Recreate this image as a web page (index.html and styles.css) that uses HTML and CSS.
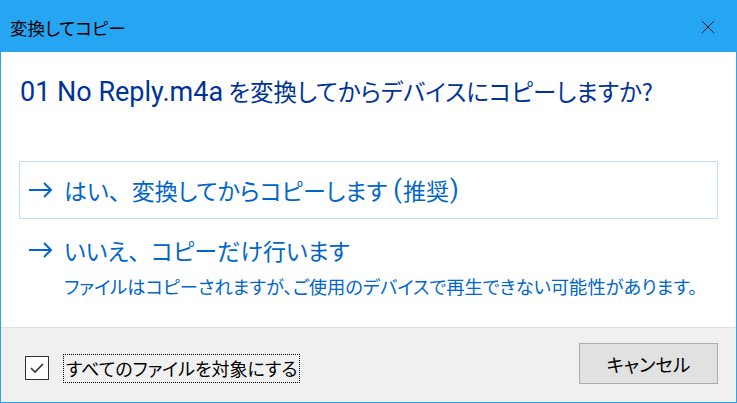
FILE: index.html
```html
<!DOCTYPE html>
<html lang="ja">
<head>
<meta charset="utf-8">
<link rel="stylesheet" href="styles.css">
</head>
<body>
<div class="window">
  <div class="titlebar">
    <span class="title">変換してコピー</span>
    <svg class="close" width="16" height="16" viewBox="0 0 16 16"><path d="M1 1 L15 15 M15 1 L1 15" stroke="#111" stroke-width="1.1" fill="none"/></svg>
  </div>
  <div class="content">
    <h1 class="heading"><span class="lat">01 No Reply.m4a</span> を変換してからデバイスにコピーしますか?</h1>
    <div class="option selected">
      <div class="opt-main"><svg class="arrow" width="24" height="16" viewBox="0 0 24 16"><path d="M0 8 H22 M15 1 L22 8 L15 15" stroke="#0066cc" stroke-width="2" fill="none"/></svg>はい<span class="full">、</span>変換してからコピーします <span class="lat">(</span>推奨<span class="lat">)</span></div>
    </div>
    <div class="option second">
      <div class="opt-main"><svg class="arrow" width="24" height="16" viewBox="0 0 24 16"><path d="M0 8 H22 M15 1 L22 8 L15 15" stroke="#0066cc" stroke-width="2" fill="none"/></svg>いいえ<span class="full">、</span>コピーだけ行います</div>
      <div class="opt-sub">ファイルはコピーされますが、ご使用のデバイスで再生できない可能性があります。</div>
    </div>
  </div>
  <div class="footer">
    <label class="check">
      <span class="box"><svg width="16" height="12" viewBox="0 0 16 12"><path d="M2 6 L6 10 L14 2" stroke="#333" stroke-width="1.6" fill="none"/></svg></span>
      <span class="check-label">すべてのファイルを対象にする</span>
    </label>
    <button class="cancel">キャンセル</button>
  </div>
</div>
</body>
</html>
```
FILE: styles.css
```css
html, body { margin: 0; padding: 0; background: #fff; }
body {
  font-family: "Noto Sans CJK JP", "Noto Sans", sans-serif;
  font-feature-settings: "palt";
}
.window {
  width: 737px; height: 403px; box-sizing: border-box;
  border: 1px solid #26a5f3; border-top: none;
  display: flex; flex-direction: column;
}
.titlebar {
  height: 52px; background: #26a5f3; flex: none;
  display: flex; align-items: center; justify-content: space-between;
  padding: 0 22px 0 10px; box-sizing: border-box;
  margin: 0 -1px;
}
.title { font-size: 17.5px; color: #000; padding-top: 2px; }
.close { width: 14px; height: 14px; margin-top: 2px; }
.content { flex: 1; padding: 24px 18px 0 18px; }
.heading {
  margin: 0 0 0 1px; font-weight: normal; font-size: 23.5px; color: #003399;
  line-height: 30px; white-space: nowrap;
}
.heading .lat { font-size: 27px; }
.lat { font-family: "Roboto", "Noto Sans", sans-serif; }
.full { font-feature-settings: normal; }
.option { padding: 0 9px; border: 1px solid transparent; color: #0066cc; }
.option.selected {
  margin-top: 54px; border-color: #bfe0f6; height: 56px;
  display: flex; align-items: center;
}
.opt-main { font-size: 23px; line-height: 30px; display: flex; align-items: center; white-space: pre; }
.option .lat { font-size: 25px; margin: 0 1px; }
.arrow { margin-right: 11px; flex: none; }
.option.second { padding-top: 15px; }
.opt-sub { font-size: 18.3px; line-height: 22px; margin-left: 35px; margin-top: 10px; white-space: nowrap; }
.footer {
  height: 75px; flex: none; background: #f0f0f0; border-top: 1px solid #dfdfdf;
  display: flex; align-items: center; justify-content: space-between;
  padding: 0 18px 0 24px; box-sizing: border-box;
}
.check { display: flex; align-items: center; gap: 14px; margin-top: 6px; }
.box {
  width: 22px; height: 22px; border: 1px solid #333; background: #fff;
  display: flex; align-items: center; justify-content: center;
}
.check-label {
  font-size: 18px; color: #000; border: 1px dotted #000; padding: 0 2px; line-height: 27px;
}
.cancel {
  width: 139px; height: 41px; background: #e1e1e1; border: 1px solid #adadad;
  font-family: "Noto Sans CJK JP", sans-serif; font-feature-settings: "palt";
  font-size: 18.5px; color: #000; padding: 0;
  margin-top: -3px;
}
```
